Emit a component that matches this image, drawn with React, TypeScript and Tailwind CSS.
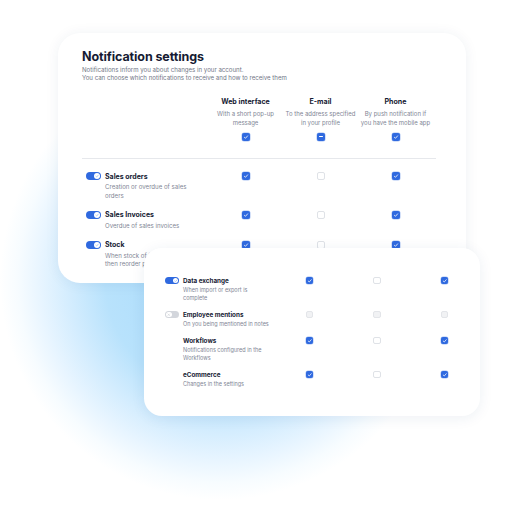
import React from "react";

type BoxState = "on" | "off" | "dis" | "ind";

function Box({ state, small }: { state: BoxState; small?: boolean }) {
  const size = small ? "w-[7.5px] h-[7.5px]" : "w-[8px] h-[8px]";
  if (state === "on") {
    return (
      <div className={`${size} rounded-[2px] bg-[#2f69df] flex items-center justify-center shadow-[0_0_0_0.5px_#a9c2f2]`}>
        <svg viewBox="0 0 10 10" className="w-full h-full">
          <path d="M3 5.4 L4.4 6.6 L7 3.6" fill="none" stroke="#ffffff" strokeWidth="1" strokeLinecap="round" strokeLinejoin="round" />
        </svg>
      </div>
    );
  }
  if (state === "ind") {
    return (
      <div className={`${size} rounded-[2px] bg-[#2f69df] flex items-center justify-center shadow-[0_0_0_0.5px_#a9c2f2]`}>
        <div className="w-[4px] h-[1px] bg-white rounded-full" />
      </div>
    );
  }
  if (state === "dis") {
    return <div className={`${size} rounded-[2px] bg-[#f1f2f4] border border-[#e3e5e9]`} />;
  }
  return <div className={`${size} rounded-[2px] bg-white border border-[#dfe2e7]`} />;
}

function Toggle({ on, small }: { on: boolean; small?: boolean }) {
  const size = small ? "w-[14px] h-[7.5px]" : "w-[15px] h-[8px]";
  const knob = small ? "w-[5.5px] h-[5.5px]" : "w-[6px] h-[6px]";
  if (on) {
    return (
      <div className={`${size} rounded-full bg-[#2f69df] flex items-center justify-end px-[1px] shrink-0`}>
        <div className={`${knob} rounded-full bg-white flex items-center justify-center`}>
          <svg viewBox="0 0 10 10" className="w-full h-full">
            <path d="M3 5.3 L4.5 6.7 L7.2 3.5" fill="none" stroke="#8fb2f2" strokeWidth="1.1" strokeLinecap="round" strokeLinejoin="round" />
          </svg>
        </div>
      </div>
    );
  }
  return (
    <div className={`${size} rounded-full bg-[#d3d6dc] flex items-center justify-start px-[1px] shrink-0`}>
      <div className={`${knob} rounded-full bg-white flex items-center justify-center`}>
        <svg viewBox="0 0 10 10" className="w-full h-full">
          <path d="M3.6 3.6 L6.4 6.4 M6.4 3.6 L3.6 6.4" fill="none" stroke="#c3c7ce" strokeWidth="0.9" strokeLinecap="round" />
        </svg>
      </div>
    </div>
  );
}

type Row = {
  title: string;
  desc: string[];
  toggle: "on" | "off" | "none";
  boxes: BoxState[];
};

const rows1: Row[] = [
  { title: "Sales orders", desc: ["Creation or overdue of sales", "orders"], toggle: "on", boxes: ["on", "off", "on"] },
  { title: "Sales Invoices", desc: ["Overdue of sales invoices"], toggle: "on", boxes: ["on", "off", "on"] },
  { title: "Stock", desc: ["When stock of items is low", "then reorder products"], toggle: "on", boxes: ["on", "off", "on"] },
];

const rows2: Row[] = [
  { title: "Data exchange", desc: ["When import or export is", "complete"], toggle: "on", boxes: ["on", "off", "on"] },
  { title: "Employee mentions", desc: ["On you being mentioned in notes"], toggle: "off", boxes: ["dis", "dis", "dis"] },
  { title: "Workflows", desc: ["Notifications configured in the", "Workflows"], toggle: "none", boxes: ["on", "off", "on"] },
  { title: "eCommerce", desc: ["Changes in the settings"], toggle: "none", boxes: ["on", "off", "on"] },
];

const headers = [
  { title: "Web interface", desc: ["With a short pop-up", "message"], box: "on" as BoxState },
  { title: "E-mail", desc: ["To the address specified", "in your profile"], box: "ind" as BoxState },
  { title: "Phone", desc: ["By push notification if", "you have the mobile app"], box: "on" as BoxState },
];

export default function App() {
  return (
    <div
      className="relative w-[524px] h-[515px] overflow-hidden bg-white pt-[33px]"
      style={{ fontFamily: "Inter, 'Liberation Sans', sans-serif" }}
    >
      {/* glow */}
      <div className="absolute left-[0px] top-[60px] w-[440px] h-[440px] rounded-full bg-[radial-gradient(circle_closest-side,#a6d9fb_0%,#b8e2fc_52%,#d2ecfe_68%,#e8f5ff_82%,#f7fcff_92%,rgba(255,255,255,0)_100%)]" />

      {/* Card 1 */}
      <div className="relative z-10 ml-[58px] w-[408px] h-[250px] rounded-[22px] bg-white shadow-[0_1px_14px_rgba(30,50,100,0.07)] pt-[16px] pl-[24px]">
        <div className="text-[12.5px] leading-[15px] font-bold text-[#161b33] tracking-[-0.1px]">Notification settings</div>
        <div className="mt-[1.5px] text-[6.1px] leading-[8.7px] text-[#707585]">
          <div>Notifications inform you about changes in your account.</div>
          <div>You can choose which notifications to receive and how to receive them</div>
        </div>

        <div className="mt-[14.5px] grid grid-cols-[126px_75px_75px_75px]">
          <div />
          {headers.map((h) => (
            <div key={h.title} className="flex flex-col items-center text-center">
              <div className="text-[7.1px] leading-[9px] font-bold text-[#161b33] whitespace-nowrap">{h.title}</div>
              <div className="mt-[2.5px] text-[6px] leading-[9px] text-[#818695] whitespace-nowrap">
                {h.desc.map((d) => (
                  <div key={d}>{d}</div>
                ))}
              </div>
              <div className="mt-[6px]">
                <Box state={h.box} />
              </div>
            </div>
          ))}
        </div>

        <div className="mt-[17.5px] w-[354px] h-px bg-[#e6e8ec]" />

        <div className="pt-[12.5px] flex flex-col gap-[10px]">
          {rows1.map((r) => (
            <div key={r.title} className="grid grid-cols-[126px_75px_75px_75px] items-start">
              <div className="flex items-start pl-[4px] gap-[4px]">
                <div className="h-[9px] flex items-center">
                  <Toggle on={r.toggle === "on"} />
                </div>
                <div>
                  <div className="text-[7px] leading-[9px] font-bold text-[#161b33] whitespace-nowrap">{r.title}</div>
                  <div className="mt-[2.5px] text-[6.1px] leading-[8.5px] text-[#818695] whitespace-nowrap">
                    {r.desc.map((d) => (
                      <div key={d}>{d}</div>
                    ))}
                  </div>
                </div>
              </div>
              {r.boxes.map((b, i) => (
                <div key={i} className="h-[9px] flex items-center justify-center">
                  <Box state={b} />
                </div>
              ))}
            </div>
          ))}
        </div>
      </div>

      {/* Card 2 */}
      <div className="relative z-20 -mt-[35px] ml-[144px] w-[336px] h-[168px] rounded-[18px] bg-white shadow-[0_2px_14px_rgba(30,60,110,0.08)] pt-[28.5px] pl-[21px]">
        <div className="flex flex-col gap-[8.5px]">
          {rows2.map((r) => (
            <div key={r.title} className="grid grid-cols-[110.5px_67.5px_67.5px_67.5px] items-start">
              <div className="flex items-start gap-[4px]">
                <div className="h-[8px] w-[14px] flex items-center shrink-0">
                  {r.toggle !== "none" && <Toggle on={r.toggle === "on"} small />}
                </div>
                <div>
                  <div className="text-[6.3px] leading-[8px] font-bold text-[#161b33] whitespace-nowrap">{r.title}</div>
                  <div className="mt-[1.5px] text-[5.5px] leading-[8px] text-[#818695] whitespace-nowrap">
                    {r.desc.map((d) => (
                      <div key={d}>{d}</div>
                    ))}
                  </div>
                </div>
              </div>
              {r.boxes.map((b, i) => (
                <div key={i} className="h-[8px] flex items-center justify-center">
                  <Box state={b} small />
                </div>
              ))}
            </div>
          ))}
        </div>
      </div>
    </div>
  );
}
